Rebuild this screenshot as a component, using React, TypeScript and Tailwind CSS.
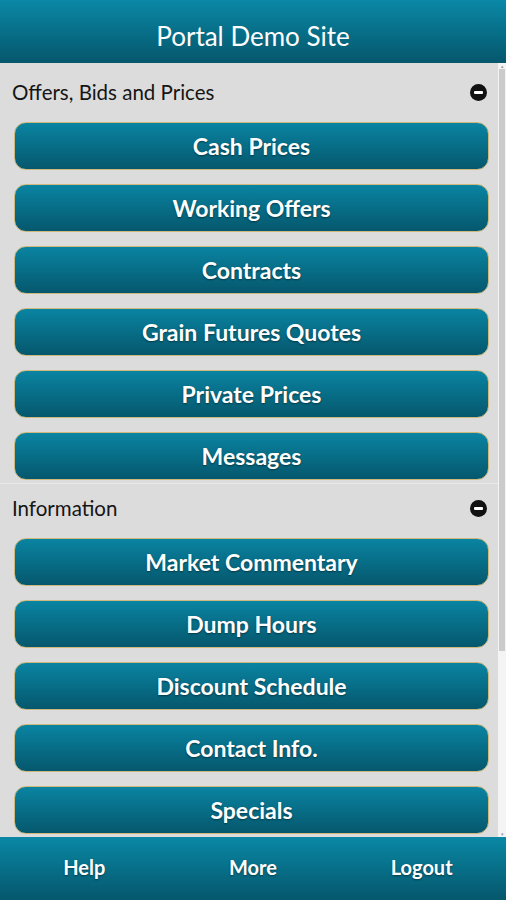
import React from "react";

const sections = [
  {
    title: "Offers, Bids and Prices",
    items: ["Cash Prices", "Working Offers", "Contracts", "Grain Futures Quotes", "Private Prices", "Messages"],
  },
  {
    title: "Information",
    items: ["Market Commentary", "Dump Hours", "Discount Schedule", "Contact Info.", "Specials"],
  },
];

function MinusIcon() {
  return (
    <svg width="17" height="17" viewBox="0 0 17 17">
      <circle cx="8.5" cy="8.5" r="8.5" fill="#111" />
      <rect x="4" y="7" width="9" height="3" rx="1" fill="#fff" />
    </svg>
  );
}

export default function App() {
  return (
    <div
      className="flex h-[900px] w-[506px] flex-col overflow-hidden bg-[#dcdcdc]"
      style={{ fontFamily: "Lato, 'Open Sans', sans-serif" }}
    >
      <header className="flex h-[63px] shrink-0 items-center justify-center bg-gradient-to-b from-[#0a88a6] to-[#05576c] pt-[9px] text-[26px] text-white">
        Portal Demo Site
      </header>
      <div className="flex min-h-0 flex-1">
        <div className="min-w-0 flex-1 overflow-hidden pt-[5px]">
          {sections.map((s, si) => (
            <section key={s.title} className={si > 0 ? "border-t border-[#e9e9e9]" : ""}>
              <div className="flex h-[48px] items-center justify-between pl-[12px] pr-[11px] text-[20.5px] text-[#151515]">
                <span>{s.title}</span>
                <MinusIcon />
              </div>
              <div className="flex flex-col gap-[14px] pl-[14px] pr-[9px] pt-[6px] pb-[3px]">
                {s.items.map((it) => (
                  <button
                    key={it}
                    className="flex h-[48px] shrink-0 items-center justify-center rounded-[12px] border border-[#cdb97c] bg-gradient-to-b from-[#0a84a2] to-[#05586d] text-[23px] font-bold text-white [text-shadow:0_1px_2px_rgba(0,0,0,0.45)]"
                  >
                    {it}
                  </button>
                ))}
              </div>
            </section>
          ))}
        </div>
        <div className="flex w-[8px] shrink-0 flex-col bg-[#f4f4f4]">
          <div className="h-[6px] text-center text-[5px] leading-[6px] text-[#999]">▴</div>
          <div className="mx-auto h-[582px] w-[6px] bg-[#cbcbcb]" />
          <div className="flex-1" />
          <div className="h-[6px] text-center text-[5px] leading-[6px] text-[#999]">▾</div>
        </div>
      </div>
      <footer className="grid h-[63px] shrink-0 grid-cols-3 items-center bg-gradient-to-b from-[#0a88a6] to-[#05576c] pb-[3px] text-[20px] font-bold text-white [text-shadow:0_1px_2px_rgba(0,0,0,0.45)]">
        <span className="text-center">Help</span>
        <span className="text-center">More</span>
        <span className="text-center">Logout</span>
      </footer>
    </div>
  );
}
